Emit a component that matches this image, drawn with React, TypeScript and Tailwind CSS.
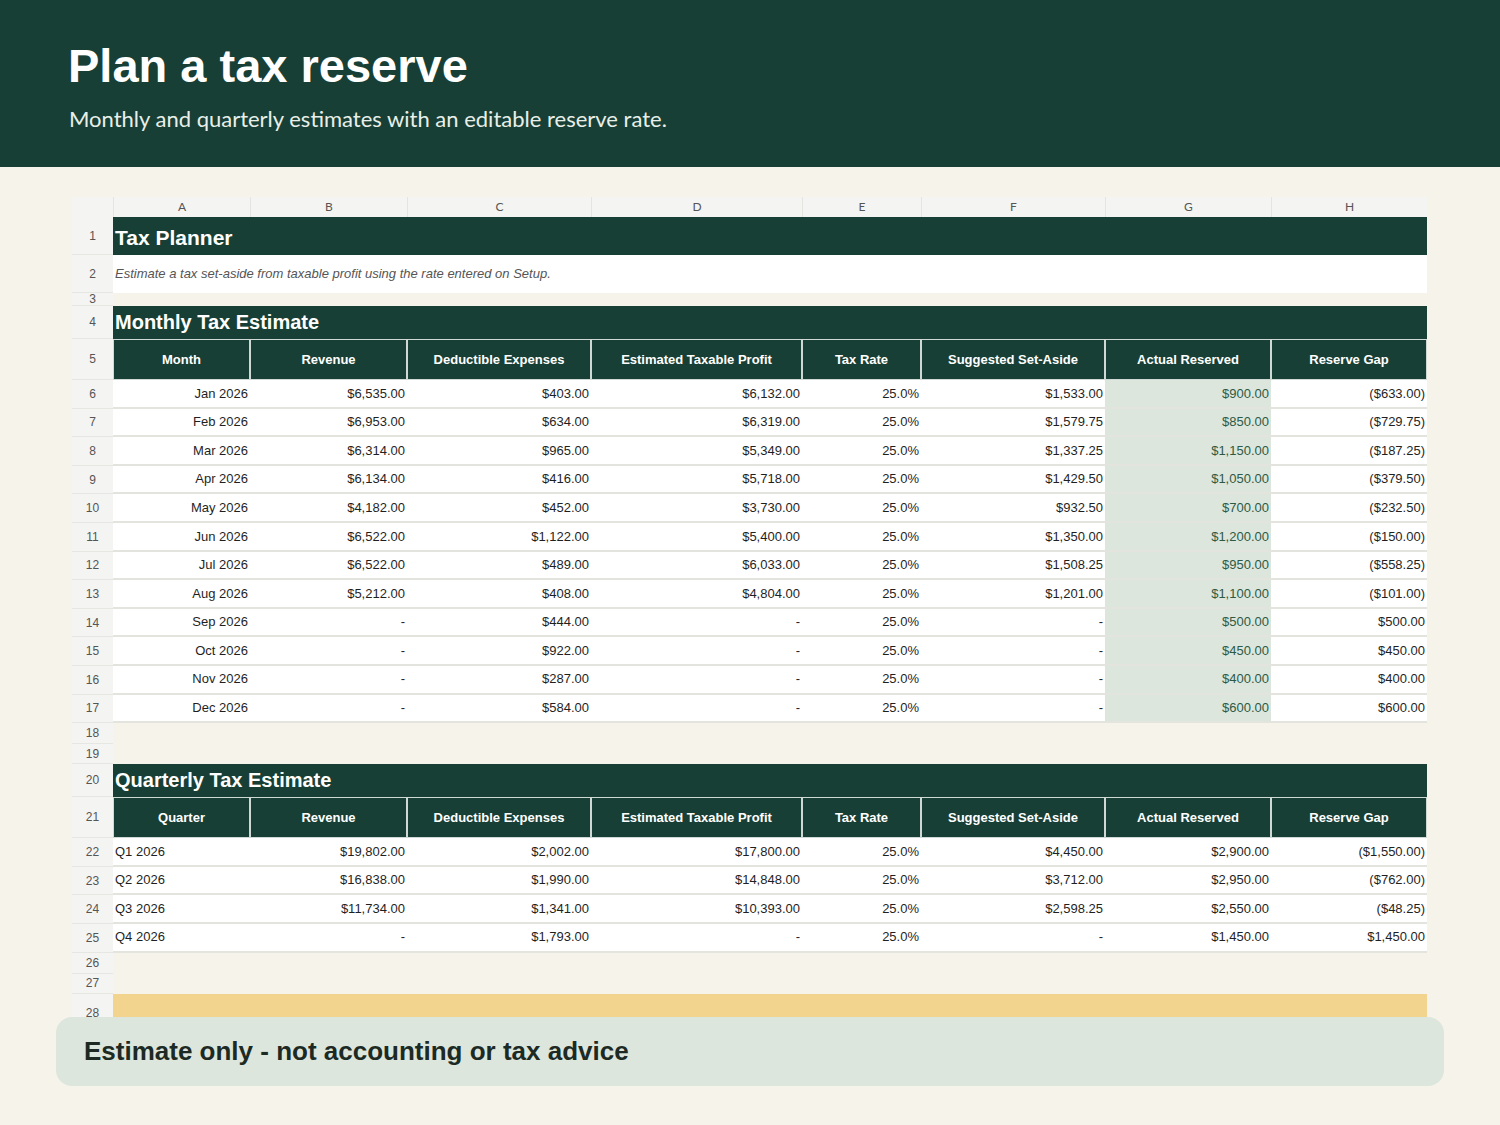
import React from "react";

const W = [137, 157, 184, 211, 119, 184, 166, 156];
const LET = ["A", "B", "C", "D", "E", "F", "G", "H"];
const HEAD = ["Revenue", "Deductible Expenses", "Estimated Taxable Profit", "Tax Rate", "Suggested Set-Aside", "Actual Reserved", "Reserve Gap"];

const monthly: string[][] = [
  ["Jan 2026", "$6,535.00", "$403.00", "$6,132.00", "25.0%", "$1,533.00", "$900.00", "($633.00)"],
  ["Feb 2026", "$6,953.00", "$634.00", "$6,319.00", "25.0%", "$1,579.75", "$850.00", "($729.75)"],
  ["Mar 2026", "$6,314.00", "$965.00", "$5,349.00", "25.0%", "$1,337.25", "$1,150.00", "($187.25)"],
  ["Apr 2026", "$6,134.00", "$416.00", "$5,718.00", "25.0%", "$1,429.50", "$1,050.00", "($379.50)"],
  ["May 2026", "$4,182.00", "$452.00", "$3,730.00", "25.0%", "$932.50", "$700.00", "($232.50)"],
  ["Jun 2026", "$6,522.00", "$1,122.00", "$5,400.00", "25.0%", "$1,350.00", "$1,200.00", "($150.00)"],
  ["Jul 2026", "$6,522.00", "$489.00", "$6,033.00", "25.0%", "$1,508.25", "$950.00", "($558.25)"],
  ["Aug 2026", "$5,212.00", "$408.00", "$4,804.00", "25.0%", "$1,201.00", "$1,100.00", "($101.00)"],
  ["Sep 2026", "-", "$444.00", "-", "25.0%", "-", "$500.00", "$500.00"],
  ["Oct 2026", "-", "$922.00", "-", "25.0%", "-", "$450.00", "$450.00"],
  ["Nov 2026", "-", "$287.00", "-", "25.0%", "-", "$400.00", "$400.00"],
  ["Dec 2026", "-", "$584.00", "-", "25.0%", "-", "$600.00", "$600.00"],
];
const quarterly: string[][] = [
  ["Q1 2026", "$19,802.00", "$2,002.00", "$17,800.00", "25.0%", "$4,450.00", "$2,900.00", "($1,550.00)"],
  ["Q2 2026", "$16,838.00", "$1,990.00", "$14,848.00", "25.0%", "$3,712.00", "$2,950.00", "($762.00)"],
  ["Q3 2026", "$11,734.00", "$1,341.00", "$10,393.00", "25.0%", "$2,598.25", "$2,550.00", "($48.25)"],
  ["Q4 2026", "-", "$1,793.00", "-", "25.0%", "-", "$1,450.00", "$1,450.00"],
];

function Num({ n, h }: { n: number; h: number }) {
  return (
    <div className="w-[41px] shrink-0 bg-[#f4f4f2] border-b border-[#e6e6e2] flex items-center justify-center text-[12px] text-[#555]" style={{ height: h }}>
      {n}
    </div>
  );
}

function Empty({ n, h }: { n: number; h: number }) {
  return (
    <div className="flex">
      <Num n={n} h={h} />
    </div>
  );
}

function Band({ n, h, text, size }: { n: number; h: number; text: string; size: string }) {
  return (
    <div className="flex">
      <Num n={n} h={h} />
      <div className={`w-[1314px] bg-[#183f36] text-white font-bold flex items-end pb-[2px] pl-[2px] ${size}`} style={{ height: h }}>
        {text}
      </div>
    </div>
  );
}

function HeadRow({ n, first }: { n: number; first: string }) {
  return (
    <div className="flex">
      <Num n={n} h={41} />
      {[first, ...HEAD].map((t, i) => (
        <div key={i} className="h-[41px] bg-[#183f36] border border-[#cfd8d2] text-white font-bold text-[13px] flex items-center justify-center" style={{ width: W[i] }}>
          {t}
        </div>
      ))}
    </div>
  );
}

function DataRow({ n, r, green, leftFirst }: { n: number; r: string[]; green: boolean; leftFirst: boolean }) {
  return (
    <div className="flex">
      <Num n={n} h={28.6} />
      {r.map((t, i) => (
        <div
          key={i}
          className={`border-b-2 border-[#e4e4df] text-[13px] flex items-center px-[2px] ${i === 0 && leftFirst ? "justify-start" : "justify-end"} ${green && i === 6 ? "bg-[#dce6dc] text-[#2e5a45]" : "bg-white text-[#1f1f1f]"}`}
          style={{ width: W[i], height: 28.6 }}
        >
          {t}
        </div>
      ))}
    </div>
  );
}

export default function App() {
  return (
    <div className="w-[1500px] h-[1125px] bg-[#f6f3eb] relative overflow-hidden" style={{ fontFamily: '"Liberation Sans", Arial, sans-serif' }}>
      <div className="h-[167px] bg-[#183f36] px-[68px] pt-[38px]">
        <div className="text-white font-bold text-[47px] leading-[56px]">Plan a tax reserve</div>
        <div className="text-[#e8efe9] text-[22px] mt-[8px] ml-[1px]" style={{ fontFamily: '"Lato", "Open Sans", sans-serif' }}>Monthly and quarterly estimates with an editable reserve rate.</div>
      </div>
      <div className="ml-[72px] mt-[30px] w-[1355px]">
        <div className="flex">
          <div className="w-[41px] h-[20px] bg-[#f4f4f2]" />
          {LET.map((l, i) => (
            <div key={l} className="h-[20px] bg-[#f4f4f2] border-l border-[#e4e4e0] text-[12px] text-[#555] flex items-center justify-center" style={{ width: W[i], fontFamily: '"Lato", sans-serif' }}>
              {l}
            </div>
          ))}
        </div>
        <Band n={1} h={38} text="Tax Planner" size="text-[21px] items-center pb-0" />
        <div className="flex">
          <Num n={2} h={38} />
          <div className="w-[1314px] h-[38px] bg-white italic text-[13px] text-[#555] flex items-center pl-[2px]">
            Estimate a tax set-aside from taxable profit using the rate entered on Setup.
          </div>
        </div>
        <Empty n={3} h={13} />
        <Band n={4} h={33} text="Monthly Tax Estimate" size="text-[20px]" />
        <HeadRow n={5} first="Month" />
        {monthly.map((r, i) => (
          <DataRow key={i} n={6 + i} r={r} green leftFirst={false} />
        ))}
        <Empty n={18} h={21} />
        <Empty n={19} h={20} />
        <Band n={20} h={33} text="Quarterly Tax Estimate" size="text-[20px]" />
        <HeadRow n={21} first="Quarter" />
        {quarterly.map((r, i) => (
          <DataRow key={i} n={22 + i} r={r} green={false} leftFirst />
        ))}
        <Empty n={26} h={21} />
        <Empty n={27} h={20} />
        <div className="flex">
          <Num n={28} h={40} />
          <div className="w-[1314px] h-[40px] bg-[#f3d48f]" />
        </div>
      </div>
      <div className="absolute left-[56px] top-[1017px] w-[1388px] h-[69px] rounded-[16px] bg-[#dce6dc] flex items-center pl-[28px] text-[26px] font-bold text-[#1d2a24]">
        Estimate only - not accounting or tax advice
      </div>
    </div>
  );
}
